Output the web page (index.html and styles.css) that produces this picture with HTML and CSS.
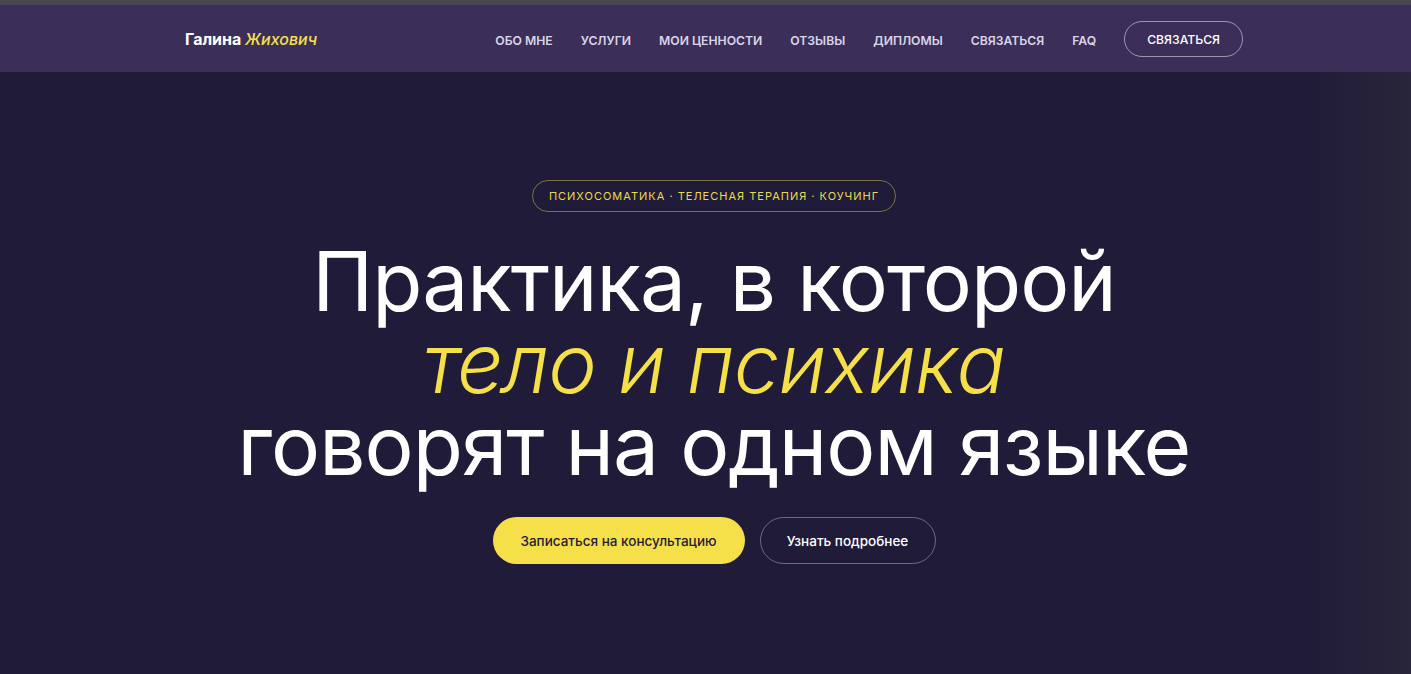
FILE: index.html
```html
<!DOCTYPE html>
<html lang="ru">
<head>
  <meta charset="UTF-8">
  <title>Галина Жихович</title>
  <link rel="stylesheet" href="styles.css">
</head>
<body>

<div class="topline"></div>

<header class="header">
  <div class="header-inner">
    <a class="logo" href="#">Галина <em>Жихович</em></a>
    <nav class="nav">
      <a href="#">Обо мне</a>
      <a href="#">Услуги</a>
      <a href="#">Мои ценности</a>
      <a href="#">Отзывы</a>
      <a href="#">Дипломы</a>
      <a href="#">Связаться</a>
      <a href="#">FAQ</a>
      <a class="nav-btn" href="#">Связаться</a>
    </nav>
  </div>
</header>

<section class="hero">
  <div class="badge">Психосоматика · Телесная терапия · Коучинг</div>
  <h1>Практика, в которой<br><em>тело и психика</em><br>говорят на одном языке</h1>
  <div class="actions">
    <a class="btn btn-primary" href="#">Записаться на консультацию</a>
    <a class="btn btn-outline" href="#">Узнать подробнее</a>
  </div>
</section>

</body>
</html>
```

FILE: styles.css
```css
body {
  margin: 0;
  padding: 0;
  background: #1f1b38;
  font-family: 'Inter', 'Noto Sans', sans-serif;
  color: #fff;
  height: 674px;
  overflow: hidden;
}
a {
  color: inherit;
  text-decoration: none;
}
.topline {
  height: 5px;
  background: #48474f;
}
.header {
  background: #3b2f5a;
  height: 67px;
  padding-left: 17px;
}
.header-inner {
  max-width: 1058px;
  height: 100%;
  margin: 0 auto;
  display: flex;
  align-items: center;
  justify-content: space-between;
}
.logo {
  font-size: 16px;
  font-weight: 700;
  color: #fff;
  margin-top: 1px;
}
.logo em {
  color: #f5e04a;
  font-weight: 500;
}
.nav {
  display: flex;
  align-items: center;
  gap: 28px;
}
.nav a {
  font-size: 12.2px;
  font-weight: 600;
  text-transform: uppercase;
  color: #d9d5e6;
  margin-top: 4px;
}
.nav a.nav-btn {
  color: #fff;
  font-weight: 500;
  border: 1px solid rgba(255,255,255,0.5);
  border-radius: 20px;
  padding: 10px 22px 9px;
  margin-top: 0;
}
.hero {
  padding: 108px 0 0 17px;
  display: flex;
  flex-direction: column;
  align-items: center;
  text-align: center;
  height: 602px;
  box-sizing: border-box;
  background: linear-gradient(90deg, rgba(0,0,0,0) 92%, #29253a 100%);
}
.badge {
  font-size: 11px;
  letter-spacing: 1px;
  text-transform: uppercase;
  color: #eadb4c;
  border: 1px solid rgba(234,219,76,0.45);
  border-radius: 16px;
  padding: 0 16px;
  height: 32px;
  line-height: 30px;
  box-sizing: border-box;
}
h1 {
  font-weight: 400;
  font-size: 82px;
  line-height: 82px;
  letter-spacing: -1px;
  margin: 29px 0 30px;
  color: #fff;
}
h1 em {
  color: #f5e04a;
  font-weight: 300;
}
.actions {
  display: flex;
  gap: 15px;
}
.btn {
  height: 47px;
  border-radius: 24px;
  font-size: 13.5px;
  font-weight: 500;
  display: flex;
  align-items: center;
  justify-content: center;
  box-sizing: border-box;
}
.btn-primary {
  background: #f5e04a;
  color: #1f1b38;
  width: 252px;
}
.btn-outline {
  border: 1px solid rgba(255,255,255,0.35);
  color: #fff;
  width: 176px;
}
```
